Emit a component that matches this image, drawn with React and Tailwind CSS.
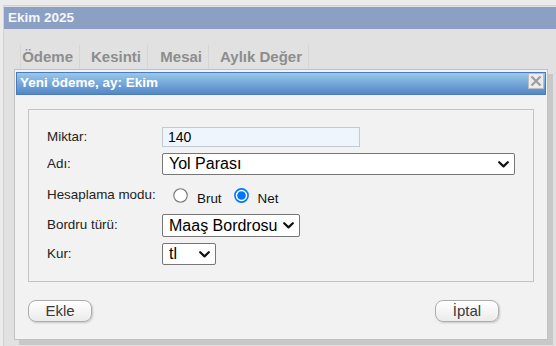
import React from 'react';

const font = { fontFamily: '"Liberation Sans", Arial, sans-serif' };

const Chevron = () => (
  <svg width="11" height="7" viewBox="0 0 11 7" className="shrink-0">
    <path d="M1.2 1.2 L5.5 5.4 L9.8 1.2" fill="none" stroke="#111" strokeWidth="2.2" strokeLinecap="round" strokeLinejoin="round" />
  </svg>
);

const FakeSelect = ({ value, width }) => (
  <div className={`flex h-full items-center justify-between gap-1 rounded-[2px] border border-[#767676] bg-white pl-[6px] pr-[5px] text-[16px] text-black ${width}`}>
    <span className="whitespace-nowrap leading-none">{value}</span>
    <Chevron />
  </div>
);

const Radio = ({ checked }) =>
  checked ? (
    <svg width="15" height="15" viewBox="0 0 15 15" className="shrink-0">
      <circle cx="7.5" cy="7.5" r="6.6" fill="#fff" stroke="#0075ff" strokeWidth="1.6" />
      <circle cx="7.5" cy="7.5" r="4.3" fill="#0075ff" />
    </svg>
  ) : (
    <svg width="15" height="15" viewBox="0 0 15 15" className="shrink-0">
      <circle cx="7.5" cy="7.5" r="6.7" fill="#fff" stroke="#767676" strokeWidth="1.1" />
    </svg>
  );

const Row = ({ label, className, children }) => (
  <div className={`flex items-center ${className}`}>
    <div className="w-[115px] shrink-0 text-[13.4px] text-[#222]">{label}</div>
    <div className="flex h-full items-center">{children}</div>
  </div>
);

const tabs = [
  { name: 'Ödeme', w: 'w-[60px] border-l' },
  { name: 'Kesinti', w: 'w-[68px]' },
  { name: 'Mesai', w: 'w-[61px]' },
  { name: 'Aylık Değer', w: 'w-[100px]' },
];

const App = () => {
  return (
    <div className="relative h-[346px] w-[556px] overflow-hidden bg-[#ebebeb] pl-[3px] pt-[5px]" style={font}>
      <div className="h-full border-l border-t border-[#d2d2d2] bg-[#e1e1e1] pt-[1px]">
        <div className="flex h-[22px] items-center bg-[#8ba0c2] pl-[4px] text-[13.5px] font-bold text-[#f4f7fb]">
          Ekim 2025
        </div>
        <div className="mt-[16px] flex pl-[16px]">
          {tabs.map(t => (
            <div
              key={t.name}
              className={`flex h-[24px] items-center justify-end border-r border-[#d6d6d6] pr-[6px] text-[15px] font-bold text-[#8d8d8d] ${t.w}`}
            >
              {t.name}
            </div>
          ))}
        </div>
      </div>

      <div className="absolute left-[14px] top-[69px] flex h-[271px] w-[534px] flex-col border border-[#c2c2c2] bg-[#f2f2f2] px-[1px] pt-[2px] shadow-[5px_5px_0_#c8c8c8]">
        <div className="flex h-[23px] items-start justify-between border border-[#4b7ab9] bg-gradient-to-b from-[#97c9eb] to-[#5586c7]">
          <span className="self-center pl-[3px] text-[13.5px] font-bold text-white">Yeni ödeme, ay: Ekim</span>
          <div className="mr-[1px] flex h-[16px] w-[16px] items-center justify-center border border-[#bdbdbd] bg-[#ececec]">
            <svg width="12" height="12" viewBox="0 0 12 12">
              <path d="M1.5 1.5 L10.5 10.5 M10.5 1.5 L1.5 10.5" stroke="#9d9d9d" strokeWidth="2.2" />
            </svg>
          </div>
        </div>

        <div className="mx-[12px] mt-[14px] h-[173px] border border-[#c4c4c4] pl-[18px] pt-[17px]">
          <Row label="Miktar:" className="h-[20px]">
            <div className="flex h-[20px] w-[198px] items-center border border-[#c3cad2] bg-[#eef5fc] pl-[5px] text-[14px] text-black">
              140
            </div>
          </Row>
          <Row label="Adı:" className="mt-[6px] h-[22px]">
            <FakeSelect value="Yol Parası" width="w-[353px]" />
          </Row>
          <Row label="Hesaplama modu:" className="mt-[6px] h-[29px]">
            <div className="ml-[11px] flex items-center">
              <Radio />
              <span className="ml-[9px] mt-[7px] text-[13.4px] text-[#111]">Brut</span>
              <span className="ml-[12px]"><Radio checked /></span>
              <span className="ml-[9px] mt-[7px] text-[13.4px] text-[#111]">Net</span>
            </div>
          </Row>
          <Row label="Bordru türü:" className="mt-[4px] h-[23px]">
            <FakeSelect value="Maaş Bordrosu" width="w-[138px]" />
          </Row>
          <Row label="Kur:" className="mt-[6px] h-[22px]">
            <FakeSelect value="tl" width="w-[54px]" />
          </Row>
        </div>

        <div className="mt-[18px] flex justify-between pl-[12px] pr-[47px]">
          {['Ekle', 'İptal'].map(b => (
            <div
              key={b}
              className="flex h-[22px] w-[64px] items-center justify-center rounded-[8px] border border-[#adadad] bg-gradient-to-b from-white to-[#ebebeb] text-[15px] text-[#3a3a3a] shadow-[1px_1px_2px_rgba(0,0,0,0.18)]"
            >
              {b}
            </div>
          ))}
        </div>
      </div>
    </div>
  );
};

export default App;
